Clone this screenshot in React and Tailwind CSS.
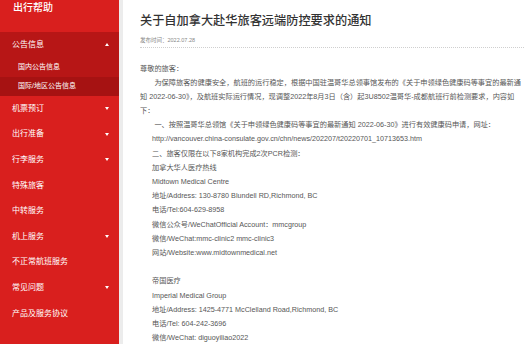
import React from 'react';

// Sidebar menu entries below the open "公告信息" group
const menu = [
  { label: '机票预订', arrow: true },
  { label: '出行准备', arrow: true },
  { label: '行李服务', arrow: true },
  { label: '特殊旅客' },
  { label: '中转服务' },
  { label: '机上服务', arrow: true },
  { label: '不正常航班服务' },
  { label: '常见问题', arrow: true },
  { label: '产品及服务协议' },
];

function Caret({ up }) {
  return (
    <svg width="4" height="3" viewBox="0 0 4 3" className="shrink-0">
      {up ? <path d="M0 3 L2 0 L4 3 Z" fill="#fff" /> : <path d="M0 0 L4 0 L2 3 Z" fill="#fff" />}
    </svg>
  );
}

function Sidebar() {
  return (
    <aside className="w-[119px] shrink-0 bg-[#d91f1e] text-white">
      {/* Header */}
      <div className="h-[32px] pl-[13px] pt-[2px] text-[10px] leading-[12px] font-medium">出行帮助</div>

      {/* Open group */}
      <div className="bg-[#b71616]">
        <div className="h-[25px] flex items-center justify-between pl-[12px] pr-[10px] text-[8px]">
          <span>公告信息</span>
          <Caret up />
        </div>
        <div className="h-[19.5px] flex items-center pl-[18px] text-[7px]">国内公告信息</div>
        <div className="h-[19.5px] flex items-center pl-[18px] text-[7px] bg-[#a61212]">国际/地区公告信息</div>
      </div>

      {menu.map((item) => (
        <div key={item.label} className="h-[25.6px] flex items-center justify-between pl-[12px] pr-[10px] text-[8px]">
          <span>{item.label}</span>
          {item.arrow && <Caret />}
        </div>
      ))}
    </aside>
  );
}

function Line({ children, className = '' }) {
  return <div className={`h-[14.2px] leading-[14.2px] whitespace-nowrap ${className}`}>{children}</div>;
}

function Notice() {
  return (
    <main className="flex-1 min-w-0 border-l-4 border-[#ececec] bg-white pl-[17px] pt-[13px] overflow-hidden">
      <h1 className="text-[12.2px] leading-[16px] font-medium text-[#333] whitespace-nowrap">
        关于自加拿大赴华旅客远端防控要求的通知
      </h1>
      <div className="mt-[6.5px] pb-[3.5px] border-b border-dotted border-[#cfcfcf] text-[5.5px] leading-[8px] text-[#888]">
        发布时间：2022.07.28
      </div>

      {/* opacity keeps the small Latin text in grey antialiasing */}
      <div className="mt-[13.5px] text-[7.2px] text-[#555] opacity-[0.99]">
        <Line>尊敬的旅客：</Line>
        <Line className="pl-[14.4px]">
          为保障旅客的健康安全，航班的运行稳定，根据中国驻温哥华总领事馆发布的《关于申领绿色健康码等事宜的最新通
        </Line>
        <Line>知 2022-06-30》，及航班实际运行情况，现调整2022年8月3日（含）起3U8502温哥华-成都航班行前检测要求，内容如</Line>
        <Line>下：</Line>
        <Line className="pl-[14.4px]">
          一、按照温哥华总领馆《关于申领绿色健康码等事宜的最新通知 2022-06-30》进行有效健康码申请，网址：
        </Line>
        <div className="pl-[12px]">
          <Line>http://vancouver.china-consulate.gov.cn/chn/news/202207/t20220701_10713653.htm</Line>
          <Line>二、旅客仅限在以下8家机构完成2次PCR检测：</Line>
          <Line>加拿大华人医疗热线</Line>
          <Line>Midtown Medical Centre</Line>
          <Line>地址/Address: 130-8780 Blundell RD,Richmond, BC</Line>
          <Line>电话/Tel:604-629-8958</Line>
          <Line>微信公众号/WeChatOfficial Account：mmcgroup</Line>
          <Line>微信/WeChat:mmc-clinic2 mmc-clinic3</Line>
          <Line>网站/Website:www.midtownmedical.net</Line>
          <Line />
          <Line>帝国医疗</Line>
          <Line>Imperial Medical Group</Line>
          <Line>地址/Address: 1425-4771 McClelland Road,Richmond, BC</Line>
          <Line>电话/Tel: 604-242-3696</Line>
          <Line>微信/WeChat: diguoyiliao2022</Line>
        </div>
      </div>
    </main>
  );
}

export default function App() {
  return (
    <div
      className="w-[524px] h-[344px] flex overflow-hidden bg-white"
      style={{ fontFamily: '"Liberation Sans", "Noto Sans CJK SC", sans-serif' }}
    >
      <Sidebar />
      <Notice />
    </div>
  );
}
